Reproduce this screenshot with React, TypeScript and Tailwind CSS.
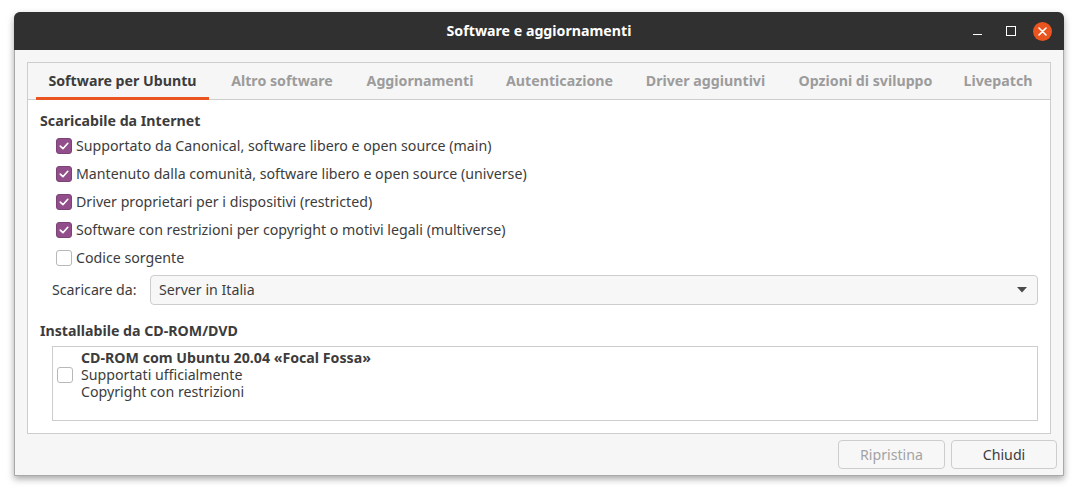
import { useState } from 'react';

const font = { fontFamily: '"Noto Sans", "Open Sans", sans-serif' };

const tabs = [
  { label: 'Software per Ubuntu', w: 'w-[173px]' },
  { label: 'Altro software', w: 'w-[128px]' },
  { label: 'Aggiornamenti', w: 'w-[130px]' },
  { label: 'Autenticazione', w: 'w-[131px]' },
  { label: 'Driver aggiuntivi', w: 'w-[143px]' },
  { label: 'Opzioni di sviluppo', w: 'w-[159px]' },
  { label: 'Livepatch', w: 'w-[88px]' },
];

const sources = [
  { label: 'Supportato da Canonical, software libero e open source (main)', on: true },
  { label: 'Mantenuto dalla comunità, software libero e open source (universe)', on: true },
  { label: 'Driver proprietari per i dispositivi (restricted)', on: true },
  { label: 'Software con restrizioni per copyright o motivi legali (multiverse)', on: true },
  { label: 'Codice sorgente', on: false },
];

const Check = ({ on, onClick }: { on: boolean; onClick?: () => void }) => (
  <span
    onClick={onClick}
    className={`flex w-[16px] h-[16px] shrink-0 items-center justify-center rounded-[3px] border ${
      on ? 'bg-[#924d8b] border-[#7d4377]' : 'bg-white border-[#b8b8b8]'
    }`}
  >
    {on && (
      <svg width="12" height="12" viewBox="0 0 12 12">
        <path d="M2.3 6.2 L4.9 8.7 L9.8 3.3" fill="none" stroke="white" strokeWidth="1.7" strokeLinecap="round" strokeLinejoin="round" />
      </svg>
    )}
  </span>
);

export default function App() {
  const [checks, setChecks] = useState(sources.map((s) => s.on));
  const [cdrom, setCdrom] = useState(false);

  return (
    <div className="w-[1083px] h-[495px] bg-white pt-[12px] pl-[14px]" style={font}>
      <div className="w-[1050px] h-[464px] flex flex-col bg-[#f6f6f6] border border-[#a9a9a9] rounded-t-[7px] shadow-[0_3px_7px_rgba(0,0,0,0.35)] text-[#3c3c3c]">
        {/* title bar */}
        <div className="relative h-[38px] shrink-0 flex items-center justify-center bg-[#303030] rounded-t-[6px] -mx-px -mt-px">
          <span className="text-white text-[14.2px] font-bold">Software e aggiornamenti</span>
          <div className="absolute right-[8px] top-0 h-full flex items-center">
            <span className="w-[34px] flex justify-center">
              <span className="block w-[9px] h-[1.5px] bg-white mt-[7px]" />
            </span>
            <span className="w-[34px] flex justify-center">
              <span className="block w-[10px] h-[10px] border-[1.5px] border-white" />
            </span>
            <span className="w-[28px] flex justify-center">
              <span className="flex w-[19px] h-[19px] rounded-full bg-[#e9541f] items-center justify-center">
                <svg width="9" height="9" viewBox="0 0 9 9">
                  <path d="M1 1 L8 8 M8 1 L1 8" stroke="white" strokeWidth="1.6" strokeLinecap="round" />
                </svg>
              </span>
            </span>
          </div>
        </div>

        {/* notebook */}
        <div className="mx-[12px] mt-[12px] h-[372px] flex flex-col border border-[#cdcdcd]">
          <div className="h-[37px] shrink-0 flex items-stretch pl-[8px] gap-[9px] bg-[#f6f6f6] border-b border-[#cdcdcd]">
            {tabs.map((t, i) => (
              <div
                key={t.label}
                className={`${t.w} flex items-center justify-center pt-[2px] text-[14.2px] font-bold whitespace-nowrap border-b-[3px] -mb-px ${
                  i === 0 ? 'text-[#3c3c3c] border-[#e95420]' : 'text-[#9c9c9c] border-transparent'
                }`}
              >
                {t.label}
              </div>
            ))}
          </div>

          <div className="flex-1 bg-white px-[12px] pt-[11px] text-[14.2px]">
            <div className="h-[20px] leading-[20px] font-bold">Scaricabile da Internet</div>
            <div className="flex flex-col pl-[16px] pt-[1px]">
              {sources.map((s, i) => (
                <label key={s.label} className="h-[28px] flex items-center gap-[4px]">
                  <Check on={checks[i]} onClick={() => setChecks(checks.map((c, j) => (j === i ? !c : c)))} />
                  <span className="whitespace-nowrap">{s.label}</span>
                </label>
              ))}
            </div>

            <div className="flex items-center mt-[3px] h-[30px]">
              <span className="w-[110px] shrink-0 pl-[12px] whitespace-nowrap">Scaricare da:</span>
              <div className="flex-1 h-[30px] flex items-center justify-between rounded-[4px] border border-[#cdcdcd] bg-[#f7f7f7] pl-[8px] pr-[10px]">
                <span>Server in Italia</span>
                <svg width="10" height="6" viewBox="0 0 10 6">
                  <path d="M0 0 H10 L5 5.5 Z" fill="#4a4a4a" />
                </svg>
              </div>
            </div>

            <div className="h-[20px] leading-[20px] font-bold mt-[16px]">Installabile da CD-ROM/DVD</div>
            <div className="ml-[12px] mt-[5px] h-[75px] border border-[#cdcdcd] bg-white flex items-start pt-[2px]">
              <div className="w-[28px] pl-[4px] pt-[18px]">
                <Check on={cdrom} onClick={() => setCdrom(!cdrom)} />
              </div>
              <div className="flex flex-col leading-[17px]">
                <span className="font-bold">CD-ROM com Ubuntu 20.04 «Focal Fossa»</span>
                <span>Supportati ufficialmente</span>
                <span>Copyright con restrizioni</span>
              </div>
            </div>
          </div>
        </div>

        {/* buttons */}
        <div className="flex justify-end gap-[6px] pr-[6px] mt-[6px] text-[14.2px]">
          <button className="w-[107px] h-[29px] rounded-[4px] border border-[#cdcdcd] bg-[#f7f7f7] text-[#a3a3a3]">
            Ripristina
          </button>
          <button className="w-[106px] h-[29px] rounded-[4px] border border-[#cdcdcd] bg-[#f7f7f7] text-[#3c3c3c]">
            Chiudi
          </button>
        </div>
      </div>
    </div>
  );
}
